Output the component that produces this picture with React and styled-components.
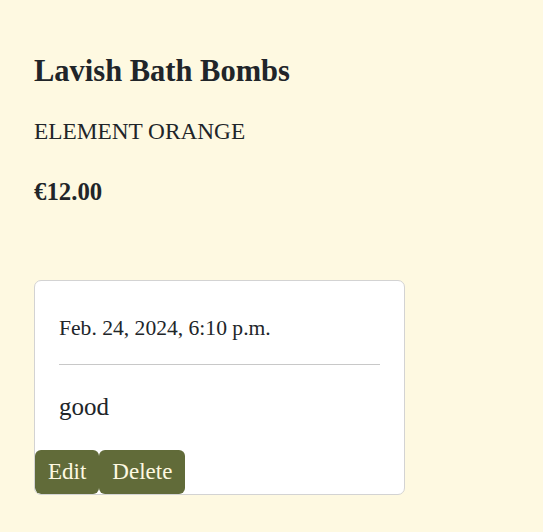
import styled, { createGlobalStyle } from 'styled-components';

const GlobalStyle = createGlobalStyle`
  body {
    margin: 0;
    background: #fef9e1;
    color: #212529;
    font-family: 'Liberation Serif', 'DejaVu Serif', serif;
  }
`;

const Page = styled.div`
  padding: 53px 34px 36px;
`;

const Title = styled.h2`
  margin: 0 0 24px;
  font-size: 30.5px;
  font-weight: 700;
  line-height: 1.2;
`;

const Brand = styled.p`
  margin: 0 0 24px;
  font-size: 23.3px;
  font-weight: 400;
  line-height: 1.5;
`;

const Price = styled.p`
  margin: 0 0 70px;
  font-size: 24.8px;
  font-weight: 700;
  line-height: 1.5;
`;

const Card = styled.div`
  width: 369px;
  background: #fff;
  border: 1px solid #d3d3d3;
  border-radius: 7px;
  overflow: hidden;
`;

const CardBody = styled.div`
  padding: 23px 24px 24px;
`;

const Stamp = styled.p`
  margin: 8px 0 0;
  font-size: 21.6px;
  line-height: 1.5;
`;

const Rule = styled.hr`
  margin: 20px 0 23px;
  border: 0;
  border-top: 1px solid #c8c8c8;
`;

const Comment = styled.p`
  margin: 0;
  font-size: 25px;
  line-height: 1.5;
`;

const Actions = styled.div`
  display: flex;
`;

const Button = styled.button`
  height: 44px;
  padding: 0 13px;
  background: #616b39;
  color: #fef9e1;
  border: 0;
  border-radius: 6px;
  font-family: inherit;
  font-size: 23px;
  cursor: pointer;
`;

export default function App() {
  return (
    <>
      <GlobalStyle />
      <Page>
        <Title>Lavish Bath Bombs</Title>
        <Brand>ELEMENT ORANGE</Brand>
        <Price>€12.00</Price>
        <Card>
          <CardBody>
            <Stamp>Feb. 24, 2024, 6:10 p.m.</Stamp>
            <Rule />
            <Comment>good</Comment>
          </CardBody>
          <Actions>
            <Button>Edit</Button>
            <Button>Delete</Button>
          </Actions>
        </Card>
      </Page>
    </>
  );
}
